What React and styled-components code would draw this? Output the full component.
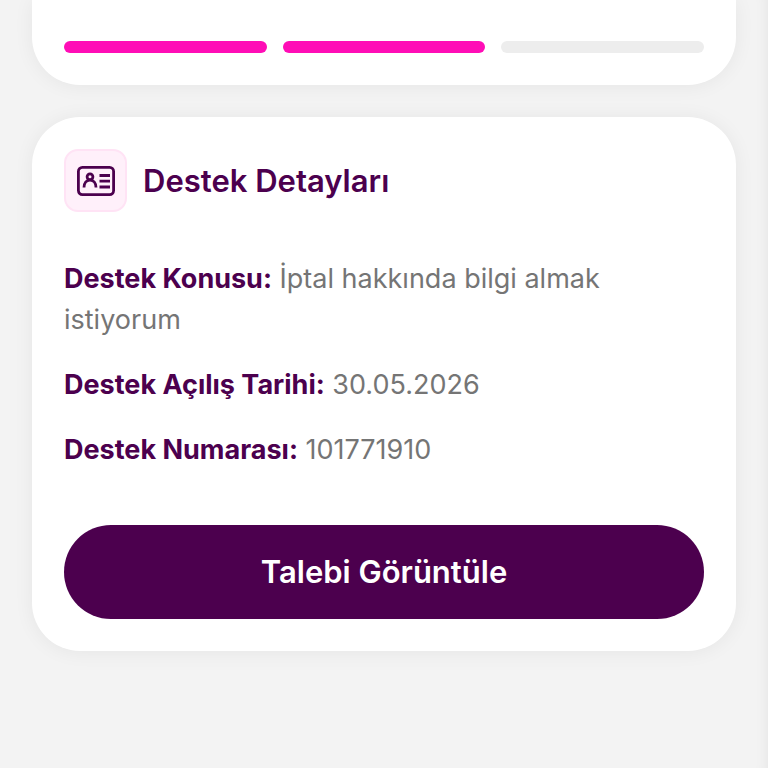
import React from 'react';
import styled, { createGlobalStyle } from 'styled-components'

const GlobalStyle = createGlobalStyle`
  * {
    box-sizing: border-box;
  }
  body {
    margin: 0;
    background: #f3f3f3;
    font-family: Inter, "Liberation Sans", sans-serif;
    color: #4c004e;
  }
`;

// page with a soft shade along the right edge
const Page = styled.main`
  display: flex;
  flex-direction: column;
  gap: 32px;
  min-height: 100vh;
  padding: 0 32px 32px;
  box-shadow: inset -12px 0 14px -12px rgba(0, 0, 0, 0.07);
`;

const Card = styled.section`
  padding: ${({ $flush }) => ($flush ? '41px 32px 32px' : '32px')};
  border-radius: ${({ $flush }) => ($flush ? '0 0 48px 48px' : '48px')};
  background: #fff;
  box-shadow: 0 1px 20px rgba(0, 0, 0, 0.06);
`;

const Steps = styled.div`
  display: flex;
  gap: 16px;
`;

const Step = styled.div`
  flex: 1;
  height: 12px;
  border-radius: 6px;
  background: ${({ $done }) => ($done ? '#ff0db6' : '#ededed')};
`;

const Header = styled.header`
  display: flex;
  align-items: center;
  gap: 16px;
`;

const IconBox = styled.span`
  display: flex;
  align-items: center;
  justify-content: center;
  width: 63px;
  height: 63px;
  border: 2px solid #ffe3f5;
  border-radius: 14px;
  background: #fff0fa;
`;

const Title = styled.h2`
  margin: 0;
  font-size: 31px;
  font-weight: 600;
  line-height: 40px;
`;

const Details = styled.div`
  display: flex;
  flex-direction: column;
  gap: 24px;
  margin: 46px 0 55px;
`;

const Detail = styled.p`
  margin: 0;
  color: #757575;
  font-size: 27px;
  line-height: 41px;
`;

const Label = styled.strong`
  color: #4c004e;
  font-weight: 700;
`;

const Button = styled.button`
  display: block;
  width: 100%;
  padding: 27px 32px;
  border: 0;
  border-radius: 48px;
  background: #4c004e;
  color: #fff;
  font-family: inherit;
  font-size: 31px;
  font-weight: 600;
  line-height: 40px;
  cursor: pointer;
`;

const details = [
  { label: 'Destek Konusu:', value: 'İptal hakkında bilgi almak istiyorum' },
  { label: 'Destek Açılış Tarihi:', value: '30.05.2026' },
  { label: 'Destek Numarası:', value: '101771910' },
];

const IdCardIcon = () => (
  <svg width="40" height="32" viewBox="0 0 40 32" fill="none" stroke="#4c004e" strokeWidth="2.8" aria-hidden="true">
    <rect x="2.4" y="2.4" width="35.2" height="27.2" rx="4" />
    <circle cx="14" cy="11.8" r="2.9" />
    <path d="M8 22.6c0-4.6 2.4-7.4 6-7.4s6 2.8 6 7.4" />
    <path d="M23.5 10.5h10.5M23.5 16.2h10.5M23.5 22h10.5" />
  </svg>
)

const App = () => (
  <>
    <GlobalStyle />
    <Page>
      <Card $flush>
        <Steps>
          <Step $done />
          <Step $done />
          <Step />
        </Steps>
      </Card>
      <Card>
        <Header>
          <IconBox><IdCardIcon /></IconBox>
          <Title>Destek Detayları</Title>
        </Header>
        <Details>
          {details.map(({ label, value }) => (
            <Detail key={label}>
              <Label>{label}</Label> {value}
            </Detail>
          ))}
        </Details>
        <Button type="button">Talebi Görüntüle</Button>
      </Card>
    </Page>
  </>
)

export default App
